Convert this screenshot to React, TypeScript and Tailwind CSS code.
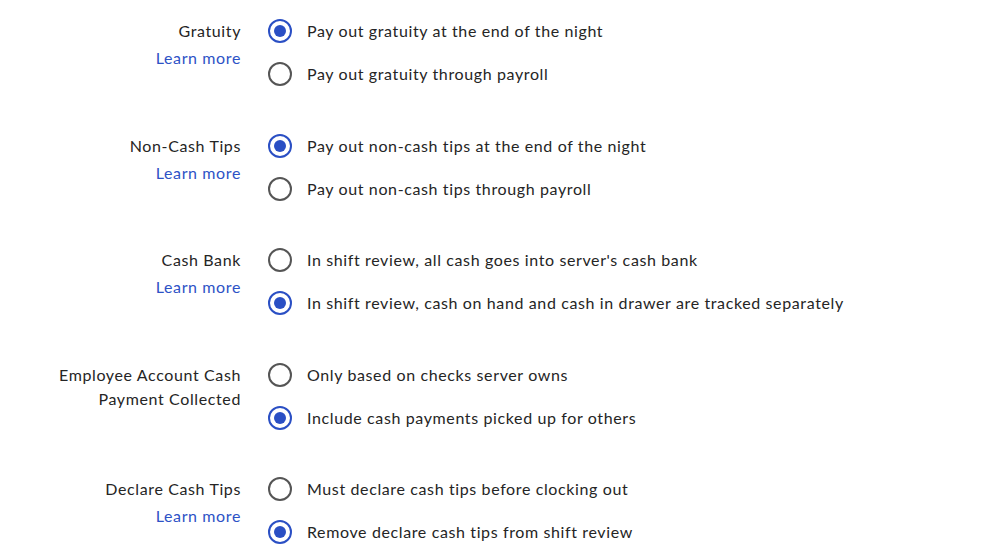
import React from "react";

type Group = {
  label: string[];
  learn: boolean;
  options: string[];
  selected: number;
};

const groups: Group[] = [
  {
    label: ["Gratuity"],
    learn: true,
    options: ["Pay out gratuity at the end of the night", "Pay out gratuity through payroll"],
    selected: 0,
  },
  {
    label: ["Non-Cash Tips"],
    learn: true,
    options: ["Pay out non-cash tips at the end of the night", "Pay out non-cash tips through payroll"],
    selected: 0,
  },
  {
    label: ["Cash Bank"],
    learn: true,
    options: [
      "In shift review, all cash goes into server's cash bank",
      "In shift review, cash on hand and cash in drawer are tracked separately",
    ],
    selected: 1,
  },
  {
    label: ["Employee Account Cash", "Payment Collected"],
    learn: false,
    options: ["Only based on checks server owns", "Include cash payments picked up for others"],
    selected: 1,
  },
  {
    label: ["Declare Cash Tips"],
    learn: true,
    options: ["Must declare cash tips before clocking out", "Remove declare cash tips from shift review"],
    selected: 1,
  },
];

function Radio({ checked }: { checked: boolean }) {
  return checked ? (
    <span className="flex h-6 w-6 shrink-0 items-center justify-center rounded-full border-[2.5px] border-[#2a4fc4]">
      <span className="h-3 w-3 rounded-full bg-[#2a4fc4]" />
    </span>
  ) : (
    <span className="h-6 w-6 shrink-0 rounded-full border-2 border-[#555555]" />
  );
}

export default function App() {
  return (
    <div
      className="min-h-[557px] w-full bg-white pt-[19px] text-[16px] leading-6 tracking-[0.62px] text-[#252525]"
      style={{ fontFamily: "Lato, 'Noto Sans', sans-serif" }}
    >
      <div className="flex flex-col gap-[47.5px]">
        {groups.map((g, i) => (
          <div key={i} className="flex gap-[27px]">
            <div className="flex w-[241px] shrink-0 flex-col items-end text-right">
              {g.label.map((l, j) => (
                <div key={j}>{l}</div>
              ))}
              {g.learn && <div className="mt-[3px] text-[#2d52c6]">Learn more</div>}
            </div>
            <div className="flex flex-col gap-[19px]">
              {g.options.map((o, j) => (
                <div key={j} className="flex items-center gap-[15px]">
                  <Radio checked={g.selected === j} />
                  <span>{o}</span>
                </div>
              ))}
            </div>
          </div>
        ))}
      </div>
    </div>
  );
}
